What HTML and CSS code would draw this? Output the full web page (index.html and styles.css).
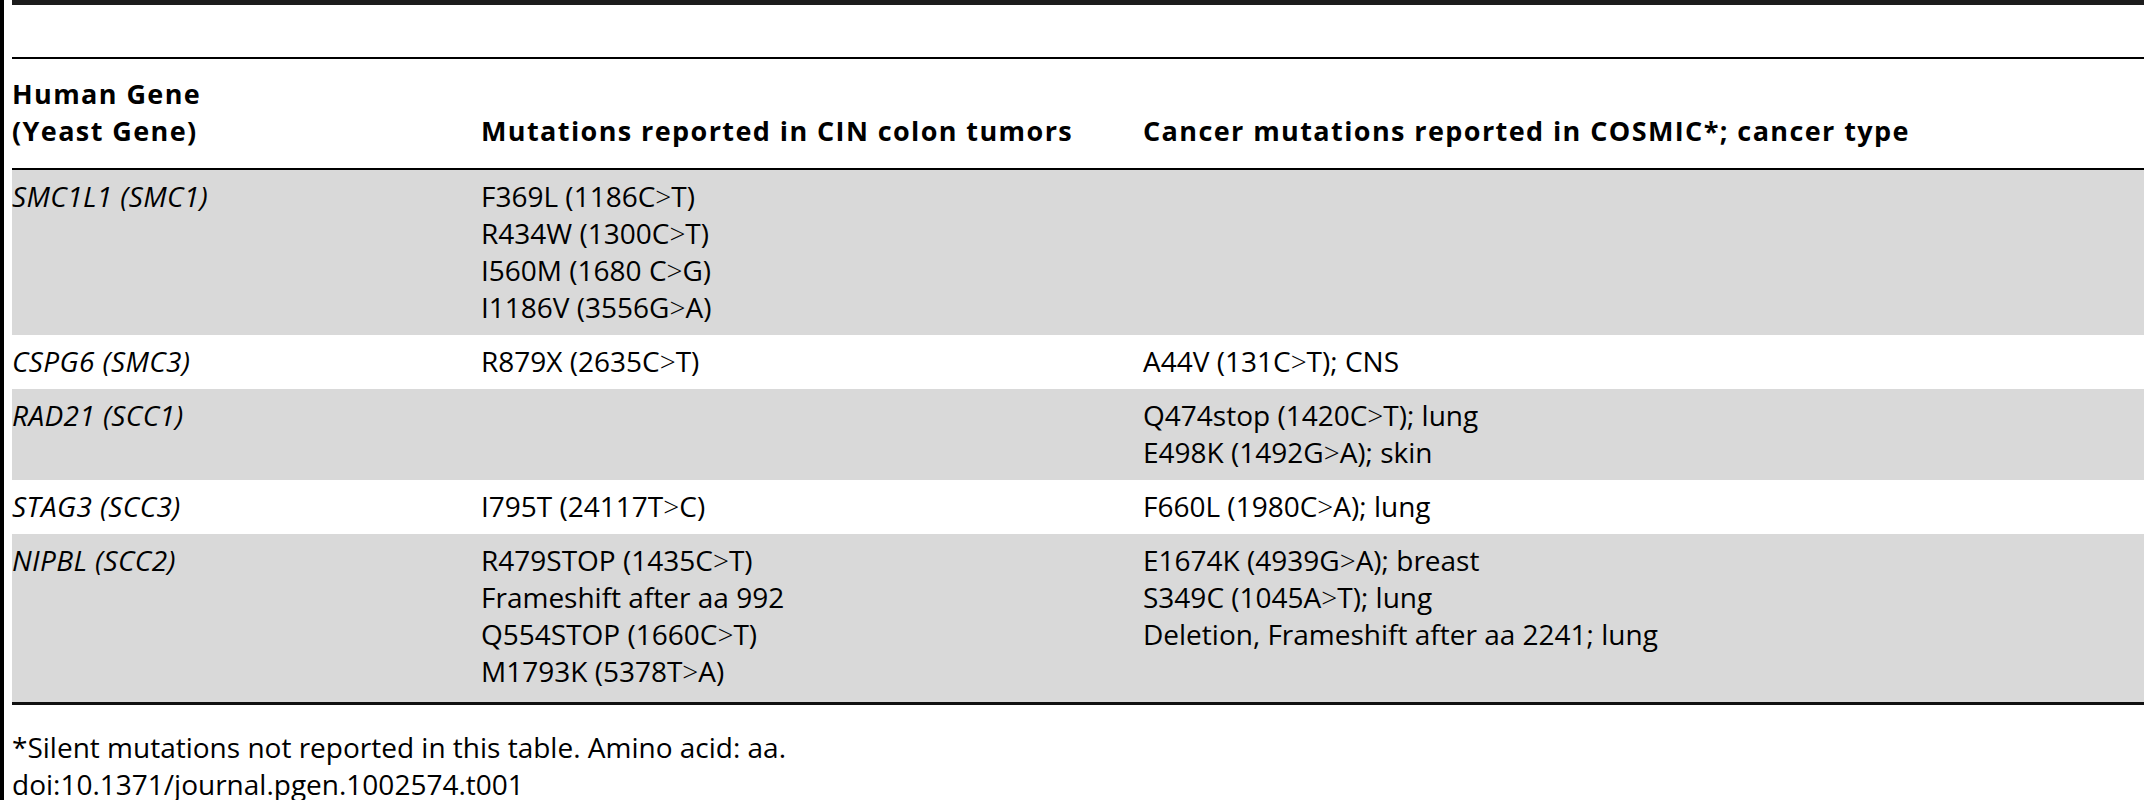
FILE: index.html
```html
<!DOCTYPE html>
<html lang="en">
<head>
<meta charset="utf-8">
<title>Cohesin mutations table</title>
<link rel="stylesheet" href="styles.css">
</head>
<body>
<div class="page">
  <table class="tbl">
    <colgroup>
      <col class="c1">
      <col class="c2">
      <col class="c3">
    </colgroup>
    <thead>
      <tr class="blank"><th colspan="3"></th></tr>
      <tr class="head">
        <th>Human Gene<br>(Yeast Gene)</th>
        <th>Mutations reported in CIN colon tumors</th>
        <th>Cancer mutations reported in COSMIC*; cancer type</th>
      </tr>
    </thead>
    <tbody>
      <tr class="shade">
        <td class="gene">SMC1L1 (SMC1)</td>
        <td>F369L (1186C<span class="gt">&gt;</span>T)<br>R434W (1300C<span class="gt">&gt;</span>T)<br>I560M (1680 C<span class="gt">&gt;</span>G)<br>I1186V (3556G<span class="gt">&gt;</span>A)</td>
        <td></td>
      </tr>
      <tr>
        <td class="gene">CSPG6 (SMC3)</td>
        <td>R879X (2635C<span class="gt">&gt;</span>T)</td>
        <td>A44V (131C<span class="gt">&gt;</span>T); CNS</td>
      </tr>
      <tr class="shade">
        <td class="gene">RAD21 (SCC1)</td>
        <td></td>
        <td>Q474stop (1420C<span class="gt">&gt;</span>T); lung<br>E498K (1492G<span class="gt">&gt;</span>A); skin</td>
      </tr>
      <tr>
        <td class="gene">STAG3 (SCC3)</td>
        <td>I795T (24117T<span class="gt">&gt;</span>C)</td>
        <td>F660L (1980C<span class="gt">&gt;</span>A); lung</td>
      </tr>
      <tr class="shade last">
        <td class="gene">NIPBL (SCC2)</td>
        <td>R479STOP (1435C<span class="gt">&gt;</span>T)<br>Frameshift after aa 992<br>Q554STOP (1660C<span class="gt">&gt;</span>T)<br>M1793K (5378T<span class="gt">&gt;</span>A)</td>
        <td>E1674K (4939G<span class="gt">&gt;</span>A); breast<br>S349C (1045A<span class="gt">&gt;</span>T); lung<br>Deletion, Frameshift after aa 2241; lung</td>
      </tr>
    </tbody>
  </table>
  <p class="foot">*Silent mutations not reported in this table. Amino acid: aa.<br>doi:10.1371/journal.pgen.1002574.t001</p>
</div>
</body>
</html>
```

FILE: styles.css
```css
html, body {
  margin: 0;
  padding: 0;
  background: #ffffff;
}

body {
  font-family: "Open Sans", "Noto Sans", sans-serif;
  font-size: 28px;
  line-height: 37px;
  color: #000000;
}

.page {
  border-left: 4px solid #000000;
  padding-left: 8px;
  padding-bottom: 2px;
  overflow: hidden;
}

.tbl {
  width: 2140px;
  border-collapse: collapse;
  table-layout: fixed;
  border-top: 5px solid #1c1c1c;
  border-bottom: 3px solid #111111;
}

.c1 { width: 469px; }
.c2 { width: 662px; }
.c3 { width: auto; }

.tbl th,
.tbl td {
  padding: 8px 0 9px 0;
  text-align: left;
  vertical-align: top;
}

.blank th {
  height: 52px;
  padding: 0;
  border-bottom: 2px solid #000000;
}

.head th {
  font-size: 27px;
  font-weight: 700;
  letter-spacing: 1.4px;
  padding: 16px 0 19px 0;
  vertical-align: bottom;
  border-bottom: 2px solid #000000;
}

.shade td {
  background: #d9d9d9;
}

.gene {
  font-style: italic;
  letter-spacing: 0.4px;
}

.last td {
  padding-bottom: 12px;
}

.gt {
  font-weight: 300;
}

.foot {
  margin: 0;
  padding-top: 24px;
}
```
